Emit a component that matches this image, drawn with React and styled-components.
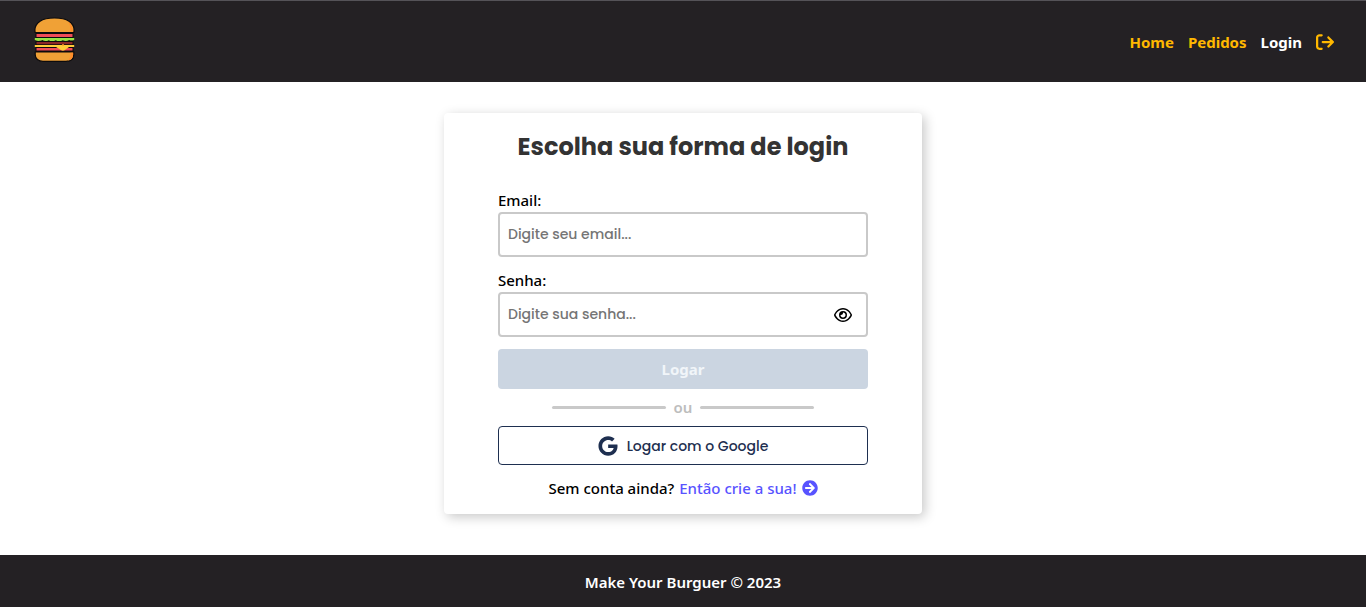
import React, { useState } from "react";
import styled, { createGlobalStyle, css } from "styled-components";
import { FaArrowRightFromBracket, FaGoogle, FaRegEye } from "react-icons/fa6";
import { FaArrowCircleRight } from "react-icons/fa";

const bodyFont = '"Segoe UI", "Noto Sans", sans-serif';
const displayFont = '"Poppins", "Inter", sans-serif';

const GlobalStyle = createGlobalStyle`
  *, *::before, *::after { box-sizing: border-box; }
  body { margin: 0; background: #fff; color: #000; font: 500 15px/20px ${bodyFont}; }
  button, input { font: inherit; margin: 0; }
`;

const Page = styled.div`
  min-height: 100vh;
  display: flex;
  flex-direction: column;
`;

const Header = styled.header`
  display: flex;
  align-items: center;
  justify-content: space-between;
  padding: 16px 32px 19px;
  background: #242124;
  border-top: 1px solid #555358;
`;

const LogoLink = styled.a`
  display: flex;
  padding: 0 2px;
`;

const Nav = styled.nav`
  display: flex;
  align-items: center;
  gap: 14px;
  padding-top: 4px;
`;

const NavLink = styled.a`
  color: ${(p) => (p.$active ? "#fff" : "#ffb800")};
  font-weight: 700;
  text-decoration: none;
`;

const IconButton = styled.button`
  display: flex;
  padding: 0;
  border: 0;
  background: none;
  color: ${(p) => p.$color};
  cursor: pointer;
`;

const Main = styled.main`
  flex: 1;
  padding: 31px 0 40px;
`;

const Card = styled.section`
  width: 35%;
  min-width: 340px;
  margin: 0 auto;
  padding: 16px 54px;
  border-radius: 4px;
  background: #fff;
  box-shadow: 3px 3px 12px rgba(0, 0, 0, 0.22);
`;

const Title = styled.h1`
  margin: 0 0 24px;
  color: #333;
  font: 700 24px/36px ${displayFont};
  text-align: center;
  white-space: nowrap;
`;

const Form = styled.form`
  display: flex;
  flex-direction: column;
  gap: 12px;
`;

const Field = styled.div`
  display: flex;
  flex-direction: column;
`;

const Label = styled.label`
  padding-bottom: 1px;
  line-height: 22px;
`;

const InputBox = styled.div`
  display: flex;
  align-items: center;
  height: 45px;
  padding-right: 14px;
  border: 2px solid #c9c9c9;
  border-radius: 4px;
`;

const Input = styled.input`
  flex: 1;
  min-width: 0;
  height: 100%;
  padding: 0 8px;
  border: 0;
  outline: 0;
  background: none;
  font: 500 14px/20px ${displayFont};
  &::placeholder { color: #757575; }
`;

const Button = styled.button`
  display: flex;
  align-items: center;
  justify-content: center;
  gap: 9px;
  width: 100%;
  border-radius: 4px;
  ${(p) =>
    p.$outline
      ? css`
          height: 39px;
          border: 1px solid #1e2f50;
          background: #fff;
          color: #1e2f50;
          font: 500 14px/20px ${displayFont};
        `
      : css`
          height: 40px;
          border: 0;
          background: #cbd5e1;
          color: #f1f5f9;
          font-weight: 700;
        `}
`;

const Divider = styled.div`
  display: flex;
  align-items: center;
  gap: 8px;
  padding: 8px 54px 9px;
  color: #bdbdbd;
  font-weight: 600;
  &::before, &::after {
    content: "";
    flex: 1;
    height: 3px;
    border-radius: 2px;
    background: #c9c9c9;
  }
`;

const Signup = styled.p`
  display: flex;
  align-items: center;
  justify-content: center;
  gap: 5px;
  margin: 13px 0 0;
  white-space: nowrap;
`;

const SignupLink = styled.a`
  display: flex;
  align-items: center;
  gap: 5px;
  color: #5853ff;
  text-decoration: none;
`;

const Footer = styled.footer`
  padding: 17px 16px 15px;
  background: #242124;
  color: #fff;
  font-weight: 600;
  text-align: center;
`;

const Burger = () => (
  <svg width="42" height="46" viewBox="0 0 42 46" aria-hidden="true">
    <path d="M1.500 14h38v22h-38z" fill="#0d0b0d" />
    <path d="M1.200 15.500C.3 11.500 2 7 6 4.200 10 1.500 15 1 20.500 1s10.500.5 14.500 3.200c4.200 2.800 5.600 7.300 4.800 11.300z" fill="#f0a136" stroke="#0d0b0d" strokeWidth="1.200" />
    <path d="M34 4.500c3.500 2.500 5 6 4.800 10.300h-2.500c.5-4-.3-7.300-2.300-10.300z" fill="#ff8c2a" />
    <path d="M2.500 17h36v3h-36z" fill="#f04c57" />
    <path d="M.8 21h39.400v2c-2 .8-3.500.8-5 0-2 1.300-4.500 1.300-6.500.2-2 1.200-5 1.200-7 0-2 1.200-5 1.200-7 0-2 1.200-4.500 1.200-6.500-.2-1.500 1.200-5 1.200-7.400 0z" fill="#96e344" />
    <path d="M2.500 25h36v2.200h-36z" fill="#8a2828" />
    <path d="M2.500 31h36v2.500h-36z" fill="#f04c57" />
    <path d="M.8 28h39.400v2H35l-4.500 3.200c-1 .6-2.200.6-3.200 0L22 30H.8z" fill="#ffcd38" />
    <path d="M1.200 35h38.600v2.500c0 4.500-3.300 6.800-7.800 6.800H9c-4.500 0-7.800-2.300-7.800-6.800z" fill="#f0a136" stroke="#0d0b0d" strokeWidth="1.200" />
    <path d="M36.500 35.700h2.600v2c0 3.300-2 5.300-5.100 5.800 2-2 2.800-4.500 2.500-7.800z" fill="#ff8c2a" />
    <circle cx="29" cy="28" r="1" fill="#ff9b28" />
  </svg>
);

export default function App() {
  const [visible, setVisible] = useState(false);
  return (
    <Page>
      <GlobalStyle />
      <Header>
        <LogoLink href="#home" aria-label="Make Your Burguer"><Burger /></LogoLink>
        <Nav>
          <NavLink href="#home">Home</NavLink>
          <NavLink href="#pedidos">Pedidos</NavLink>
          <NavLink href="#login" $active>Login</NavLink>
          <IconButton type="button" aria-label="Sair" $color="#ffb800"><FaArrowRightFromBracket size={18} /></IconButton>
        </Nav>
      </Header>
      <Main>
        <Card>
          <Title>Escolha sua forma de login</Title>
          <Form onSubmit={(e) => e.preventDefault()}>
            <Field>
              <Label htmlFor="email">Email:</Label>
              <InputBox>
                <Input id="email" type="email" placeholder="Digite seu email..." />
              </InputBox>
            </Field>
            <Field>
              <Label htmlFor="senha">Senha:</Label>
              <InputBox>
                <Input id="senha" type={visible ? "text" : "password"} placeholder="Digite sua senha..." />
                <IconButton type="button" aria-label="Mostrar senha" $color="#000" onClick={() => setVisible(!visible)}>
                  <FaRegEye size={18} />
                </IconButton>
              </InputBox>
            </Field>
            <Button type="submit" disabled>Logar</Button>
          </Form>
          <Divider>ou</Divider>
          <Button type="button" $outline><FaGoogle size={20} />Logar com o Google</Button>
          <Signup>
            Sem conta ainda?
            <SignupLink href="#cadastro">Então crie a sua!<FaArrowCircleRight size={16} /></SignupLink>
          </Signup>
        </Card>
      </Main>
      <Footer>Make Your Burguer © 2023</Footer>
    </Page>
  );
}
